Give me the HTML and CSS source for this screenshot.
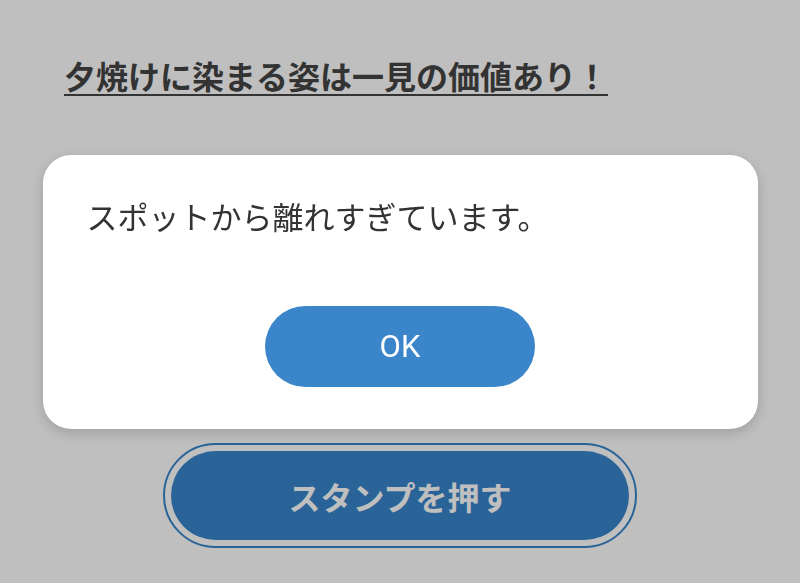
FILE: index.html
```html
<!DOCTYPE html>
<html lang="ja">
<head>
  <meta charset="UTF-8" />
  <meta name="viewport" content="width=device-width, initial-scale=1" />
  <title>スポット詳細</title>
  <link rel="stylesheet" href="styles.css">
</head>
<body>
  <div class="spot-page">
    <h2 class="spot-title">夕焼けに染まる姿は一見の価値あり！</h2>

    <div class="spot-body"></div>

    <div class="stamp-row">
      <div class="stamp-ring">
        <button class="stamp-button">スタンプを押す</button>
      </div>
    </div>
  </div>

  <div class="overlay">
    <div class="alert-box">
      <p class="alert-message">スポットから離れすぎています。</p>
      <div class="alert-actions">
        <button class="ok-button">OK</button>
      </div>
    </div>
  </div>
</body>
</html>
```

FILE: styles.css
```css
body {
  margin: 0;
  background-color: #fff;
  font-family: "Noto Sans CJK JP", "Noto Sans", sans-serif;
  color: #444;
}
.spot-page {
  padding: 56px 64px 0;
}
.spot-title {
  display: inline-block;
  margin: 0;
  font-size: 32px;
  font-weight: bold;
  line-height: 38px;
  color: #444;
  border-bottom: 2px solid #444;
}
.spot-body {
  height: 347px;
}
.stamp-row {
  display: flex;
  justify-content: center;
}
.stamp-ring {
  display: flex;
  padding: 6px;
  border: 2px solid #3885cb;
  border-radius: 53px;
}
.stamp-button {
  width: 458px;
  height: 89px;
  border: none;
  border-radius: 45px;
  background-color: #3885cb;
  color: #fff;
  font-family: inherit;
  font-size: 32px;
  font-weight: bold;
  cursor: pointer;
}
.overlay {
  position: fixed;
  inset: 0;
  background-color: rgba(0, 0, 0, 0.25);
  display: flex;
  align-items: center;
  justify-content: center;
}
.alert-box {
  width: 715px;
  height: 274px;
  box-sizing: border-box;
  background-color: #fff;
  border-radius: 28px;
  padding: 38px 44px 0;
  box-shadow: 0 4px 14px rgba(0, 0, 0, 0.18);
}
.alert-message {
  margin: 0;
  font-size: 31px;
  line-height: 46px;
  color: #333;
}
.alert-actions {
  display: flex;
  justify-content: center;
  margin-top: 67px;
}
.ok-button {
  width: 270px;
  height: 81px;
  border: none;
  border-radius: 41px;
  background-color: #3b86ca;
  color: #fff;
  font-family: Roboto, "Noto Sans", sans-serif;
  font-size: 31px;
  font-weight: 400;
  cursor: pointer;
}
```
